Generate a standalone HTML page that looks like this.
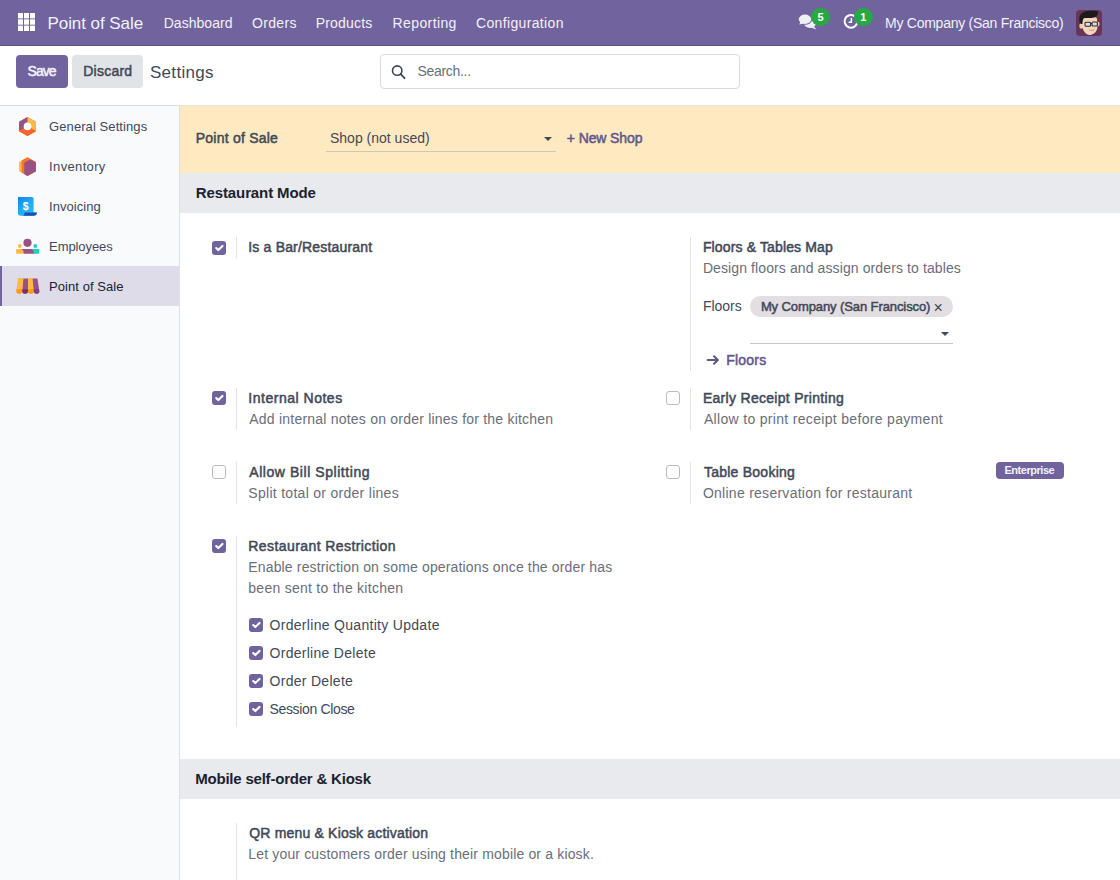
<!DOCTYPE html>
<html lang="en">
<head>
<meta charset="utf-8">
<title>Settings - Point of Sale</title>
<style>
*{box-sizing:border-box;margin:0;padding:0}
html,body{width:1120px;height:880px;overflow:hidden;background:#fff}
body{font-family:"Liberation Sans",sans-serif;font-size:14px;color:#374151;position:relative}
.a{position:absolute}
.nav{position:absolute;left:0;top:0;width:1120px;height:46px;background:#71639e;border-bottom:1px solid #5f5488}
.cp{position:absolute;left:0;top:46px;width:1120px;height:60px;background:#fff;border-bottom:1px solid #dcdee2}
.btn{position:absolute;top:55px;height:33px;border-radius:4px}
.side{position:absolute;left:0;top:106px;width:180px;height:774px;background:#f9fafb;border-right:1px solid #dfe1e5}
.sel{position:absolute;left:0;top:266px;width:179px;height:40px;background:#dedce8;border-left:2px solid #71639e}
.t{position:absolute;white-space:nowrap;line-height:20px;height:20px}
.h2{position:absolute;left:180px;width:940px;height:40px;background:#e8eaed}
.vl{position:absolute;width:1px;background:#e1e3e6}
.cb{position:absolute;width:14px;height:14px;border-radius:3px;border:1px solid #b9bbc0;background:#fff}
.cb.on{background:#71639e;border-color:#71639e}
.ul{position:absolute;height:1px;background:#c3c5ca}
.caret{position:absolute;width:0;height:0;border-left:4px solid transparent;border-right:4px solid transparent;border-top:4px solid #3f4958}
.badge{position:absolute;width:18.6px;height:18.4px;border-radius:9.3px;background:#28a745;color:#fff;font-size:11px;font-weight:bold;line-height:18px;text-align:center}
</style>
</head>
<body>
<div class="nav"></div>
<svg class="a" style="left:18px;top:13px" width="17" height="18" viewBox="0 0 17 18"><g fill="#fff"><rect x="0" y="0" width="5" height="5.4"/><rect x="6" y="0" width="5" height="5.4"/><rect x="12" y="0" width="5" height="5.4"/><rect x="0" y="6.3" width="5" height="5.4"/><rect x="6" y="6.3" width="5" height="5.4"/><rect x="12" y="6.3" width="5" height="5.4"/><rect x="0" y="12.6" width="5" height="5.4"/><rect x="6" y="12.6" width="5" height="5.4"/><rect x="12" y="12.6" width="5" height="5.4"/></g></svg>
<!-- chat icon -->
<svg class="a" style="left:798px;top:13px" width="20" height="18" viewBox="0 0 20 18"><g fill="#f1eff6"><ellipse cx="12" cy="10.3" rx="6" ry="4.6"/><path d="M15.6 13 L18.4 16.4 L13 14.6Z"/></g><ellipse cx="7" cy="6.2" rx="7.2" ry="5.6" fill="#71639e"/><g fill="#f1eff6"><ellipse cx="7" cy="6.2" rx="6.2" ry="4.7"/><path d="M2.6 8.6 L1.2 11.6 L6 10.4Z"/></g></svg>
<div class="badge" style="left:811.2px;top:8px">5</div>
<svg class="a" style="left:843px;top:13px" width="17" height="17" viewBox="0 0 17 17"><circle cx="8" cy="8.3" r="6.4" fill="none" stroke="#fff" stroke-width="2"/><path d="M8.4 5v4.2H5.6" fill="none" stroke="#fff" stroke-width="1.5"/></svg>
<div class="badge" style="left:854px;top:8px">1</div>
<!-- avatar -->
<svg class="a" style="left:1076px;top:10px" width="26" height="26" viewBox="0 0 26 26"><rect width="26" height="26" rx="4" fill="#683556"/><ellipse cx="5.4" cy="16" rx="2" ry="2.8" fill="#f1cdb0"/><ellipse cx="22" cy="14" rx="1.5" ry="2.3" fill="#f1cdb0"/><path d="M6 9 C6 6 20 5 21 9 L21.5 17 C21 23 16 25 13.5 25 C10 25 7 21 6.5 17Z" fill="#f5d6bb"/><path d="M3.6 12.5 C2.2 5.5 5.5 1.2 12 1 C17 0.6 21 0.8 22.2 1.8 C21.8 5.6 20.2 7.4 17 7.8 C13 8.5 9 7.5 7.6 8.6 C6.6 10 6.6 12 6.2 14 C5 14 4 13.4 3.6 12.5Z" fill="#1d1a1c"/><rect x="9" y="12.2" width="5.6" height="4" rx="1" fill="#d9dfe2" stroke="#2a2a2a" stroke-width="1.1"/><rect x="16" y="12" width="5.4" height="4" rx="1" fill="#d9dfe2" stroke="#2a2a2a" stroke-width="1.1"/><path d="M14.6 13.6 H16" stroke="#2a2a2a" stroke-width="1"/><path d="M13 19.6 C15 21 17 20.6 18.6 19.2" fill="none" stroke="#b98a6a" stroke-width="0.8"/></svg>

<div class="cp"></div>
<div class="btn" style="left:16px;width:52px;background:#71639e"></div>
<div class="btn" style="left:72px;width:71px;background:#e1e4e7"></div>
<div class="a" style="left:380px;top:54px;width:360px;height:35px;border:1px solid #d8dadd;border-radius:4px;background:#fff"></div>
<svg class="a" style="left:390px;top:63px" width="18" height="18" viewBox="0 0 18 18"><circle cx="7.2" cy="7.6" r="4.7" fill="none" stroke="#3c4350" stroke-width="1.6"/><path d="M10.7 11.2 L14.6 15.1" stroke="#3c4350" stroke-width="1.8" stroke-linecap="round"/></svg>

<div class="side"></div>
<div class="sel"></div>
<!-- General Settings -->
<svg class="a" style="left:18px;top:116px" width="19" height="21" viewBox="0 0 19 21">
<path d="M9.5 1 L17.9 5.7 L17.9 15.2 L9.5 20 L1.1 15.2 L1.1 5.7Z" fill="#f9652a"/>
<path d="M9.5 1 L1.1 5.7 L1.1 14.4 L4 13.6 L9.5 10.5Z" fill="#985184"/>
<path d="M9.5 1 L17.9 5.7 L17.9 15.2 L15 13.6 L9.5 10.5Z" fill="#fbb945"/>
<path d="M1.1 15.2 L9.5 20 L17.9 15.2 L13.5 12.2 L5.5 12.2Z" fill="#f9652a"/>
<circle cx="9.5" cy="10.4" r="3.8" fill="#fff"/>
</svg>
<!-- Inventory -->
<svg class="a" style="left:18px;top:156px" width="19" height="21" viewBox="0 0 19 21">
<path d="M9.5 1.2 L17.9 5.9 L17.9 15.2 L9.5 19.9 L1.1 15.2 L1.1 5.9Z" fill="#fbb945"/>
<path d="M9.5 1.2 L17.9 5.9 L17.9 15.2 L9.5 19.9 L3.6 16.6 L3.6 4.5Z" fill="#f9752a"/>
<path d="M12.2 3.6 L17.9 6.6 L17.9 15.2 L9.5 19.9 L6.3 18 L6.3 6.8Z" fill="#985184"/>
</svg>
<!-- Invoicing -->
<svg class="a" style="left:17px;top:196px" width="21" height="21" viewBox="0 0 21 21">
<defs><linearGradient id="gi" x1="0" y1="0" x2="1" y2="1"><stop offset="0" stop-color="#0f83ee"/><stop offset="0.5" stop-color="#24aef3"/><stop offset="1" stop-color="#2cbdf4"/></linearGradient></defs>
<path d="M1 1 H15 Q16.6 1 16.6 2.6 V16.5 H19.8 Q19.6 19.7 16.4 19.7 H3.6 Q1 19.7 1 17Z" fill="url(#gi)"/>
<path d="M7.8 16.4 H19.9 Q19.7 19.7 16.4 19.7 H5.5 Q7.6 19.2 7.8 16.4Z" fill="#1b4fb5"/>
<text x="8.6" y="14.2" font-family="Liberation Sans, sans-serif" font-size="10.5" font-weight="bold" fill="#fff" text-anchor="middle">$</text>
</svg>
<!-- Employees -->
<svg class="a" style="left:16px;top:236px" width="24" height="20" viewBox="0 0 24 20">
<circle cx="11.5" cy="6.8" r="4.1" fill="#985184"/>
<circle cx="3.8" cy="10" r="1.9" fill="#fbb945"/>
<circle cx="19.3" cy="10" r="1.9" fill="#1ad3bb"/>
<path d="M0.6 13 H7 L8.6 17.8 H0.2 V13.6 Q0.2 13 0.6 13Z" fill="#fbb945"/>
<path d="M23 13 H16 L17.4 17.8 H23.2 V13.4 Q23.2 13 23 13Z" fill="#1ad3bb"/>
<path d="M5.8 13 H15.4 Q17.6 13.4 18 17.8 H8 Q7.6 14 5.8 13Z" fill="#985184"/>
</svg>
<!-- Point of Sale -->
<svg class="a" style="left:16px;top:277px" width="24" height="18" viewBox="0 0 24 18">
<path d="M2 1 H7.4 L6.3 14 Q6.2 16.8 3.2 16.8 Q0.2 16.8 0.3 14Z" fill="#fbb945"/>
<path d="M7.4 1.6 H12 V14 Q12 16.8 9.1 16.8 Q6.2 16.8 6.3 14Z" fill="#985184"/>
<path d="M12 1 H16.6 L17.7 14 Q17.8 16.8 14.9 16.8 Q12 16.8 12 14Z" fill="#fbb945"/>
<path d="M16.6 1.6 H21.4 L23.3 14 Q23.6 16.8 20.6 16.8 Q17.8 16.8 17.7 14Z" fill="#985184"/>
<path d="M0.5 12.3 H6.5 L6.3 14 Q6.2 16.8 3.2 16.8 Q0.2 16.8 0.3 14Z" fill="#f89a1e"/>
<path d="M6.5 12.3 H12 V14 Q12 16.8 9.1 16.8 Q6.2 16.8 6.3 14Z" fill="#7b2f6c"/>
<path d="M12 12.3 H17.5 L17.7 14 Q17.8 16.8 14.9 16.8 Q12 16.8 12 14Z" fill="#f89a1e"/>
<path d="M17.5 12.3 H23 L23.3 14 Q23.6 16.8 20.6 16.8 Q17.8 16.8 17.7 14Z" fill="#8c3a80"/>
</svg>


<div class="a" style="left:180px;top:106px;width:940px;height:67px;background:#fee9c0"></div>
<div class="a" style="left:180px;top:105px;width:940px;height:1px;background:#e6e2d5"></div>
<div class="ul" style="left:326px;top:151px;width:230px;background:#cdc8b9"></div>
<div class="caret" style="left:544px;top:137px"></div>
<div class="h2" style="top:173px"></div>
<div class="h2" style="top:759px"></div>

<div class="vl" style="left:236px;top:237px;height:21px"></div>
<div class="vl" style="left:690px;top:237px;height:134px"></div>
<div class="vl" style="left:236px;top:388px;height:42px"></div>
<div class="vl" style="left:690px;top:388px;height:42px"></div>
<div class="vl" style="left:236px;top:462px;height:42px"></div>
<div class="vl" style="left:690px;top:462px;height:42px"></div>
<div class="vl" style="left:236px;top:536px;height:191px"></div>
<div class="vl" style="left:236px;top:823px;height:57px"></div>

<svg class="a" style="left:212px;top:241px" width="14" height="14" viewBox="0 0 20 20"><rect width="20" height="20" rx="4.3" fill="#71639e"/><path d="M6 10l3 3l6-6" fill="none" stroke="#fff" stroke-width="3" stroke-linecap="round" stroke-linejoin="round"/></svg>
<svg class="a" style="left:212px;top:391px" width="14" height="14" viewBox="0 0 20 20"><rect width="20" height="20" rx="4.3" fill="#71639e"/><path d="M6 10l3 3l6-6" fill="none" stroke="#fff" stroke-width="3" stroke-linecap="round" stroke-linejoin="round"/></svg>
<div class="cb" style="left:212px;top:465px"></div>
<svg class="a" style="left:212px;top:539px" width="14" height="14" viewBox="0 0 20 20"><rect width="20" height="20" rx="4.3" fill="#71639e"/><path d="M6 10l3 3l6-6" fill="none" stroke="#fff" stroke-width="3" stroke-linecap="round" stroke-linejoin="round"/></svg>
<div class="cb" style="left:666px;top:391px"></div>
<div class="cb" style="left:666px;top:465px"></div>
<svg class="a" style="left:249px;top:618px" width="14" height="14" viewBox="0 0 20 20"><rect width="20" height="20" rx="4.3" fill="#71639e"/><path d="M6 10l3 3l6-6" fill="none" stroke="#fff" stroke-width="3" stroke-linecap="round" stroke-linejoin="round"/></svg>
<svg class="a" style="left:249px;top:646px" width="14" height="14" viewBox="0 0 20 20"><rect width="20" height="20" rx="4.3" fill="#71639e"/><path d="M6 10l3 3l6-6" fill="none" stroke="#fff" stroke-width="3" stroke-linecap="round" stroke-linejoin="round"/></svg>
<svg class="a" style="left:249px;top:674px" width="14" height="14" viewBox="0 0 20 20"><rect width="20" height="20" rx="4.3" fill="#71639e"/><path d="M6 10l3 3l6-6" fill="none" stroke="#fff" stroke-width="3" stroke-linecap="round" stroke-linejoin="round"/></svg>
<svg class="a" style="left:249px;top:702px" width="14" height="14" viewBox="0 0 20 20"><rect width="20" height="20" rx="4.3" fill="#71639e"/><path d="M6 10l3 3l6-6" fill="none" stroke="#fff" stroke-width="3" stroke-linecap="round" stroke-linejoin="round"/></svg>

<div class="a" style="left:750px;top:296px;width:203px;height:21px;border-radius:10.5px;background:#e3dee1"></div>
<div class="caret" style="left:941px;top:332px"></div>
<div class="ul" style="left:750px;top:343px;width:203px"></div>
<svg class="a" style="left:706px;top:354px" width="14" height="12" viewBox="0 0 14 12"><path d="M1.6 6 H11.8 M8 2.2 L11.9 6 L8 9.8" fill="none" stroke="#62568a" stroke-width="2" stroke-linecap="round" stroke-linejoin="round"/></svg>
<div class="a" style="left:996px;top:462px;width:68px;height:17px;border-radius:4px;background:#71639e"></div>

<span class="t" style="left:47.50px;top:14px;font-size:17px;letter-spacing:-0.067px;color:#f3f1f7">Point of Sale</span>
<span class="t" style="left:163.70px;top:13px;font-size:14px;letter-spacing:0.038px;color:#f3f1f7">Dashboard</span>
<span class="t" style="left:252.00px;top:13px;font-size:14px;letter-spacing:0.340px;color:#f3f1f7">Orders</span>
<span class="t" style="left:315.70px;top:13px;font-size:14px;letter-spacing:0.186px;color:#f3f1f7">Products</span>
<span class="t" style="left:392.50px;top:13px;font-size:14px;letter-spacing:0.400px;color:#f3f1f7">Reporting</span>
<span class="t" style="left:476.00px;top:13px;font-size:14px;letter-spacing:0.350px;color:#f3f1f7">Configuration</span>
<span class="t" style="left:885.10px;top:13px;font-size:14px;letter-spacing:-0.264px;color:#f3f1f7">My Company (San Francisco)</span>
<span class="t" style="left:27.60px;top:61px;font-size:14px;-webkit-text-stroke:0.5px;letter-spacing:-1.000px;color:#f3f1f7">Save</span>
<span class="t" style="left:83.20px;top:61px;font-size:14px;-webkit-text-stroke:0.5px;letter-spacing:0.250px;color:#3f4958">Discard</span>
<span class="t" style="left:149.90px;top:63px;font-size:17px;letter-spacing:0.329px;color:#3f4958">Settings</span>
<span class="t" style="left:417.50px;top:61px;font-size:14px;letter-spacing:-0.312px;color:#6a6e7a">Search...</span>
<span class="t" style="left:49.10px;top:117px;font-size:13px;letter-spacing:0.080px;color:#3f4958">General Settings</span>
<span class="t" style="left:49.10px;top:157px;font-size:13px;letter-spacing:0.350px;color:#3f4958">Inventory</span>
<span class="t" style="left:49.10px;top:197px;font-size:13px;letter-spacing:0.038px;color:#3f4958">Invoicing</span>
<span class="t" style="left:49.10px;top:237px;font-size:13px;letter-spacing:-0.087px;color:#3f4958">Employees</span>
<span class="t" style="left:49.10px;top:277px;font-size:13px;letter-spacing:0.050px;color:#1b2230">Point of Sale</span>
<span class="t" style="left:195.75px;top:128px;font-size:14px;-webkit-text-stroke:0.5px;letter-spacing:0.229px;color:#3f4958">Point of Sale</span>
<span class="t" style="left:330.00px;top:128px;font-size:14px;letter-spacing:0.000px;color:#3f4958">Shop (not used)</span>
<span class="t" style="left:566.80px;top:128px;font-size:14px;-webkit-text-stroke:0.5px;letter-spacing:-0.111px;color:#62568a">+ New Shop</span>
<span class="t" style="left:195.75px;top:183px;font-size:15px;font-weight:bold;letter-spacing:-0.107px;color:#1b2230">Restaurant Mode</span>
<span class="t" style="left:248.30px;top:237px;font-size:14px;-webkit-text-stroke:0.5px;letter-spacing:0.178px;color:#3f4958">Is a Bar/Restaurant</span>
<span class="t" style="left:702.90px;top:237px;font-size:14px;-webkit-text-stroke:0.5px;letter-spacing:0.139px;color:#3f4958">Floors &amp; Tables Map</span>
<span class="t" style="left:702.90px;top:258px;font-size:14px;letter-spacing:0.105px;color:#6a6e7a">Design floors and assign orders to tables</span>
<span class="t" style="left:702.90px;top:296px;font-size:14px;letter-spacing:-0.020px;color:#3f4958">Floors</span>
<span class="t" style="left:760.90px;top:297px;font-size:13px;-webkit-text-stroke:0.5px;letter-spacing:-0.096px;color:#3f4958">My Company (San Francisco)</span>
<span class="t" style="left:933.60px;top:298px;font-size:16px;letter-spacing:0.000px;color:#3f4958">×</span>
<span class="t" style="left:726.20px;top:350px;font-size:14px;-webkit-text-stroke:0.5px;letter-spacing:0.220px;color:#62568a">Floors</span>
<span class="t" style="left:248.30px;top:388px;font-size:14px;-webkit-text-stroke:0.5px;letter-spacing:0.515px;color:#3f4958">Internal Notes</span>
<span class="t" style="left:249.30px;top:409px;font-size:14px;letter-spacing:0.217px;color:#6a6e7a">Add internal notes on order lines for the kitchen</span>
<span class="t" style="left:702.90px;top:388px;font-size:14px;-webkit-text-stroke:0.5px;letter-spacing:0.300px;color:#3f4958">Early Receipt Printing</span>
<span class="t" style="left:703.90px;top:409px;font-size:14px;letter-spacing:0.322px;color:#6a6e7a">Allow to print receipt before payment</span>
<span class="t" style="left:249.30px;top:462px;font-size:14px;-webkit-text-stroke:0.5px;letter-spacing:0.553px;color:#3f4958">Allow Bill Splitting</span>
<span class="t" style="left:248.30px;top:483px;font-size:14px;letter-spacing:0.288px;color:#6a6e7a">Split total or order lines</span>
<span class="t" style="left:703.90px;top:462px;font-size:14px;-webkit-text-stroke:0.5px;letter-spacing:0.250px;color:#3f4958">Table Booking</span>
<span class="t" style="left:702.90px;top:483px;font-size:14px;letter-spacing:0.269px;color:#6a6e7a">Online reservation for restaurant</span>
<span class="t" style="left:1004.50px;top:460px;font-size:11px;font-weight:bold;letter-spacing:-0.467px;color:#f3f1f7">Enterprise</span>
<span class="t" style="left:248.30px;top:536px;font-size:14px;-webkit-text-stroke:0.5px;letter-spacing:0.419px;color:#3f4958">Restaurant Restriction</span>
<span class="t" style="left:248.30px;top:557px;font-size:14px;letter-spacing:0.149px;color:#6a6e7a">Enable restriction on some operations once the order has</span>
<span class="t" style="left:248.30px;top:578px;font-size:14px;letter-spacing:0.265px;color:#6a6e7a">been sent to the kitchen</span>
<span class="t" style="left:269.50px;top:615px;font-size:14px;letter-spacing:0.304px;color:#3f4958">Orderline Quantity Update</span>
<span class="t" style="left:269.50px;top:643px;font-size:14px;letter-spacing:0.287px;color:#3f4958">Orderline Delete</span>
<span class="t" style="left:269.50px;top:671px;font-size:14px;letter-spacing:0.291px;color:#3f4958">Order Delete</span>
<span class="t" style="left:269.50px;top:699px;font-size:14px;letter-spacing:-0.342px;color:#3f4958">Session Close</span>
<span class="t" style="left:195.20px;top:769px;font-size:15px;font-weight:bold;letter-spacing:-0.208px;color:#1b2230">Mobile self-order &amp; Kiosk</span>
<span class="t" style="left:249.30px;top:823px;font-size:14px;-webkit-text-stroke:0.5px;letter-spacing:0.180px;color:#3f4958">QR menu &amp; Kiosk activation</span>
<span class="t" style="left:248.30px;top:844px;font-size:14px;letter-spacing:0.159px;color:#6a6e7a">Let your customers order using their mobile or a kiosk.</span>
</body>
</html>
